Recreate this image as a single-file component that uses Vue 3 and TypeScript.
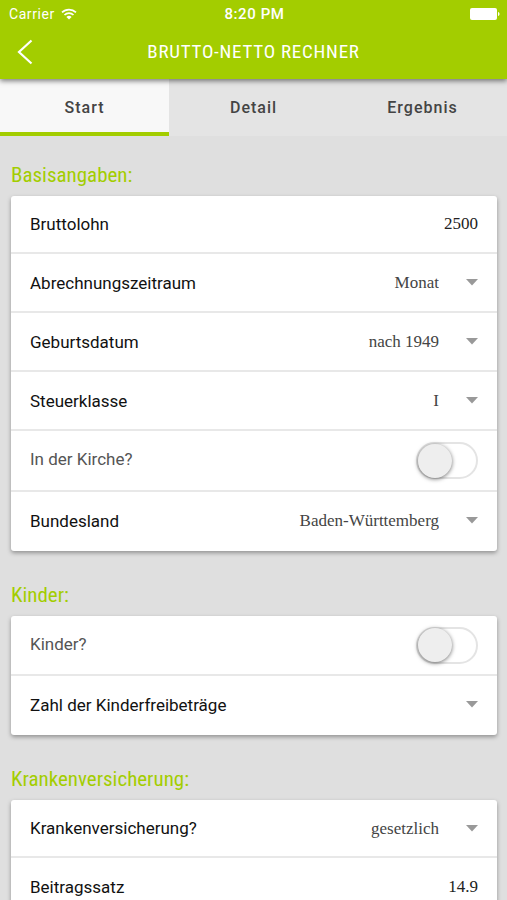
<script setup lang="ts">
import { reactive, ref } from 'vue'

type RowKind = 'input' | 'select' | 'toggle'

interface Row {
  id: string
  label: string
  kind: RowKind
  options?: string[]
}

interface Section {
  title: string
  rows: Row[]
}

const tabs = ['Start', 'Detail', 'Ergebnis']
const activeTab = ref('Start')

const sections: Section[] = [
  {
    title: 'Basisangaben:',
    rows: [
      { id: 'brutto', label: 'Bruttolohn', kind: 'input' },
      { id: 'zeitraum', label: 'Abrechnungszeitraum', kind: 'select', options: ['Monat', 'Jahr'] },
      { id: 'geburt', label: 'Geburtsdatum', kind: 'select', options: ['nach 1949', 'vor 1950'] },
      { id: 'klasse', label: 'Steuerklasse', kind: 'select', options: ['I', 'II', 'III', 'IV', 'V', 'VI'] },
      { id: 'kirche', label: 'In der Kirche?', kind: 'toggle' },
      { id: 'land', label: 'Bundesland', kind: 'select', options: ['Baden-Württemberg', 'Bayern', 'Berlin', 'Hessen'] },
    ],
  },
  {
    title: 'Kinder:',
    rows: [
      { id: 'kinder', label: 'Kinder?', kind: 'toggle' },
      { id: 'freibetrag', label: 'Zahl der Kinderfreibeträge', kind: 'select', options: ['', '0.5', '1.0', '1.5', '2.0'] },
    ],
  },
  {
    title: 'Krankenversicherung:',
    rows: [
      { id: 'kv', label: 'Krankenversicherung?', kind: 'select', options: ['gesetzlich', 'privat'] },
      { id: 'satz', label: 'Beitragssatz', kind: 'input' },
    ],
  },
]

const values = reactive<Record<string, string>>({
  brutto: '2500',
  zeitraum: 'Monat',
  geburt: 'nach 1949',
  klasse: 'I',
  land: 'Baden-Württemberg',
  freibetrag: '',
  kv: 'gesetzlich',
  satz: '14.9',
})

const switches = reactive<Record<string, boolean>>({ kirche: false, kinder: false })
</script>

<template>
  <div class="app">
    <header class="header">
      <div class="status">
        <div class="carrier">
          <span>Carrier</span>
          <svg class="wifi" viewBox="0 0 16 12" aria-hidden="true">
            <path d="M1 4.4a10 10 0 0 1 14 0M3.5 7a6.4 6.4 0 0 1 9 0" fill="none" stroke="currentColor" stroke-width="1.7" />
            <path d="M8 11.6 5.4 8.9a3.8 3.8 0 0 1 5.2 0z" fill="currentColor" />
          </svg>
        </div>
        <span class="clock">8:20 PM</span>
        <svg class="battery" viewBox="0 0 30 12" aria-hidden="true">
          <rect width="27" height="12" rx="2" fill="currentColor" />
          <path d="M28 4c2 .4 2 3.6 0 4z" fill="currentColor" />
        </svg>
      </div>
      <div class="bar">
        <button class="back" type="button" aria-label="Zurück">
          <svg viewBox="0 0 16 26" aria-hidden="true">
            <path d="M14.5 1.500 2 13l12.500 11.500" fill="none" stroke="currentColor" stroke-width="2.2" />
          </svg>
        </button>
        <h1 class="title">BRUTTO-NETTO RECHNER</h1>
      </div>
    </header>

    <nav class="tabs">
      <button
        v-for="tab in tabs"
        :key="tab"
        type="button"
        class="tab"
        :class="{ active: tab === activeTab }"
        @click="activeTab = tab"
      >
        {{ tab }}
      </button>
    </nav>

    <main class="content">
      <section v-for="section in sections" :key="section.title" class="section">
        <h2 class="heading">{{ section.title }}</h2>
        <div class="card">
          <div v-for="row in section.rows" :key="row.id" class="row" :class="row.kind">
            <label class="label" :for="row.id">{{ row.label }}</label>
            <input v-if="row.kind === 'input'" :id="row.id" v-model="values[row.id]" class="field" type="text" inputmode="decimal" />
            <template v-else-if="row.kind === 'select'">
              <select :id="row.id" v-model="values[row.id]" class="field choice">
                <option v-for="option in row.options" :key="option" :value="option">{{ option }}</option>
              </select>
              <svg class="arrow" viewBox="0 0 12 7" aria-hidden="true"><path d="M0 0h12L6 6.500z" fill="currentColor" /></svg>
            </template>
            <input v-else :id="row.id" v-model="switches[row.id]" class="switch" type="checkbox" role="switch" />
          </div>
        </div>
      </section>
    </main>
  </div>
</template>

<style>
body {
  margin: 0;
  background: #dfdfdf;
}
</style>

<style scoped>
.app {
  display: flex;
  flex-direction: column;
  height: 100vh;
  background: #dfdfdf;
  font-family: Roboto, sans-serif;
}

.header {
  z-index: 1;
  flex: none;
  background: #a3cd00;
  color: #fff;
  box-shadow: 0 2px 5px rgba(0, 0, 0, 0.5);
}

.status {
  display: grid;
  grid-template-columns: 1fr auto 1fr;
  align-items: center;
  height: 27px;
  padding: 0 7px 0 9px;
  font-size: 14px;
}

.carrier {
  display: flex;
  align-items: center;
  gap: 6px;
  letter-spacing: 0.04em;
}

.wifi {
  width: 16px;
  height: 12px;
}

.clock {
  font-size: 15px;
  font-weight: 500;
  letter-spacing: 0.04em;
}

.battery {
  justify-self: end;
  width: 30px;
  height: 12px;
}

.bar {
  display: grid;
  grid-template-columns: 50px 1fr 50px;
  align-items: center;
  height: 50px;
  padding-bottom: 2px;
}

.back {
  display: flex;
  justify-content: center;
  padding: 0;
  border: 0;
  background: none;
  color: inherit;
}

.back svg {
  width: 16px;
  height: 26px;
}

.title {
  margin: 0;
  text-align: center;
  font: 400 19px/24px 'Roboto Condensed', Roboto, sans-serif;
  letter-spacing: 0.04em;
}

.tabs {
  display: grid;
  grid-template-columns: repeat(3, 1fr);
  flex: none;
  height: 57px;
  background: #e4e4e4;
}

.tab {
  padding: 3px 0 0;
  border: 0;
  border-bottom: 4px solid transparent;
  background: none;
  color: #444;
  font: 500 16px Roboto, sans-serif;
  letter-spacing: 1px;
}

.tab.active {
  border-bottom-color: #a3cd00;
  background: #f8f8f8;
}

.content {
  flex: 1;
  min-height: 0;
  padding: 0 10px 0 11px;
  overflow-y: auto;
  scrollbar-width: none;
}

.section {
  padding-top: 27px;
}

.section + .section {
  padding-top: 32px;
}

.heading {
  margin: 0;
  padding-bottom: 9px;
  color: #a3cd00;
  font: 400 21px/24px 'Roboto Condensed', Roboto, sans-serif;
}

.card {
  border-radius: 3px;
  background: #fff;
  box-shadow: 0 2px 4px rgba(0, 0, 0, 0.35);
}

.row {
  display: flex;
  align-items: center;
  box-sizing: border-box;
  height: 59px;
  padding: 0 19px;
  border-bottom: 2px solid #e8e8e8;
}

.row.toggle {
  height: 61px;
}

.row:first-child {
  height: 58px;
}

.row.toggle:first-child {
  height: 60px;
}

.row:last-child {
  border-bottom-color: transparent;
}

.label {
  flex: none;
  color: #111;
  font-size: 17px;
}

.toggle .label {
  padding-bottom: 3px;
  color: #555;
}

.field {
  flex: 1;
  min-width: 0;
  height: 40px;
  padding: 0;
  border: 0;
  outline: 0;
  background: none;
  color: #222;
  font: 17px 'Liberation Serif', serif;
  text-align: right;
}

.choice {
  appearance: none;
  color: #444;
  text-align-last: right;
}

.arrow {
  flex: none;
  width: 12px;
  height: 7px;
  margin-left: 27px;
  color: #999;
}

.switch {
  display: flex;
  align-items: center;
  appearance: none;
  box-sizing: border-box;
  width: 62px;
  height: 37px;
  margin: 0 0 0 auto;
  border: 2px solid #e4e4e4;
  border-radius: 19px;
  background: #fff;
}

.switch::before {
  width: 34px;
  height: 34px;
  border-radius: 50%;
  background: #eee;
  box-shadow: 0 1px 4px rgba(0, 0, 0, 0.55);
  content: '';
}

.switch:checked {
  justify-content: flex-end;
  background: #a3cd00;
}
</style>
